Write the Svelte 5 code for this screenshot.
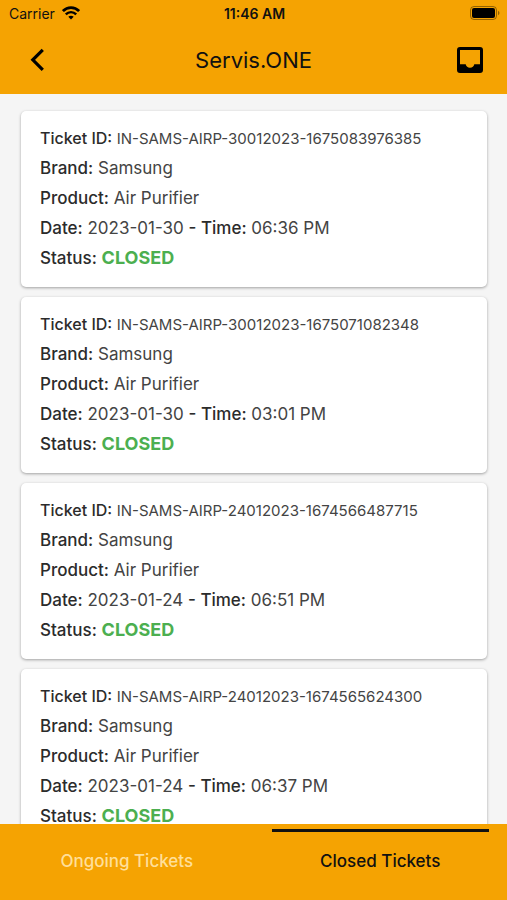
<script lang="ts">
  type Ticket = { id: string; brand: string; product: string; date: string; time: string; status: string };

  const closedTickets: Ticket[] = [
    { id: 'IN-SAMS-AIRP-30012023-1675083976385', brand: 'Samsung', product: 'Air Purifier', date: '2023-01-30', time: '06:36 PM', status: 'CLOSED' },
    { id: 'IN-SAMS-AIRP-30012023-1675071082348', brand: 'Samsung', product: 'Air Purifier', date: '2023-01-30', time: '03:01 PM', status: 'CLOSED' },
    { id: 'IN-SAMS-AIRP-24012023-1674566487715', brand: 'Samsung', product: 'Air Purifier', date: '2023-01-24', time: '06:51 PM', status: 'CLOSED' },
    { id: 'IN-SAMS-AIRP-24012023-1674565624300', brand: 'Samsung', product: 'Air Purifier', date: '2023-01-24', time: '06:37 PM', status: 'CLOSED' }
  ];

  let activeTab = $state('closed');
  let tickets = $derived(activeTab === 'closed' ? closedTickets : []);
</script>

<div class="screen">
  <header>
    <div class="status-bar">
      <div class="carrier">
        <span>Carrier</span>
        <svg width="18" height="14" viewBox="0 0 18 14" fill="none" stroke="#000" stroke-width="2.8" aria-hidden="true">
          <path d="M0.9 5.1C5.4 0.4 12.6 0.4 17.1 5.1" />
          <path d="M3.8 8.4C6.7 5.4 11.3 5.4 14.2 8.4" stroke-width="2.4" />
          <path d="M6.3 10.8C7.8 9.3 10.2 9.3 11.7 10.8L9 13.6Z" fill="#000" stroke="none" />
        </svg>
      </div>
      <span class="clock">11:46 AM</span>
      <svg class="battery" width="30" height="14" viewBox="0 0 30 14" aria-hidden="true">
        <rect x="0.5" y="0.5" width="26" height="13" rx="3.5" fill="none" stroke="#000" stroke-opacity="0.4" />
        <rect x="2" y="2" width="23" height="10" rx="2" fill="#000" />
        <path d="M28 4.8C30 5.6 30 8.4 28 9.2Z" fill="#000" fill-opacity="0.4" />
      </svg>
    </div>
    <div class="app-bar">
      <button class="icon-button" aria-label="Back">
        <svg width="26" height="26" viewBox="0 0 26 26" fill="none" stroke="#000" stroke-width="3.2">
          <path d="M18.8 2.8L8.8 12.8L18.8 22.8" />
        </svg>
      </button>
      <h1>Servis.ONE</h1>
      <button class="icon-button" aria-label="Inbox">
        <svg width="26" height="26" viewBox="0 0 26 26">
          <path fill-rule="evenodd" d="M3 0H23A3 3 0 0 1 26 3V23A3 3 0 0 1 23 26H3A3 3 0 0 1 0 23V3A3 3 0 0 1 3 0ZM3 3V17.3H8.7A4.4 4.4 0 0 0 17.3 17.3H23V3Z" />
        </svg>
      </button>
    </div>
  </header>

  <main>
    {#each tickets as ticket (ticket.id)}
      <article>
        <p class="ticket-id"><b>Ticket ID:</b> <span>{ticket.id}</span></p>
        <p><b>Brand:</b> {ticket.brand}</p>
        <p><b>Product:</b> {ticket.product}</p>
        <p><b>Date:</b> {ticket.date} <b>- Time:</b> {ticket.time}</p>
        <p><b>Status:</b> <strong>{ticket.status}</strong></p>
      </article>
    {/each}
  </main>

  <nav>
    <button class:active={activeTab === 'ongoing'} onclick={() => (activeTab = 'ongoing')}>Ongoing Tickets</button>
    <button class:active={activeTab === 'closed'} onclick={() => (activeTab = 'closed')}>Closed Tickets</button>
  </nav>
</div>

<style>
  :global(body) {
    margin: 0;
  }

  .screen {
    display: flex;
    flex-direction: column;
    height: 100vh;
    background: #f5f5f5;
    color: #444;
    font-family: Inter, sans-serif;
  }

  header {
    flex: none;
    background: #f5a302;
    color: #111;
  }

  .status-bar {
    display: grid;
    grid-template-columns: 1fr auto 1fr;
    align-items: center;
    height: 26px;
    padding: 0 7px 0 9px;
    font-size: 14px;
  }

  .carrier {
    display: flex;
    align-items: center;
    gap: 7px;
  }

  .clock {
    font-weight: 600;
  }

  .battery {
    justify-self: end;
  }

  .app-bar {
    display: flex;
    align-items: center;
    justify-content: space-between;
    height: 68px;
    padding: 0 24px;
  }

  h1 {
    margin: 0;
    font-size: 22px;
    font-weight: 400;
  }

  button {
    border: 0;
    padding: 0;
    background: none;
    font: inherit;
    cursor: pointer;
  }

  .icon-button {
    display: flex;
  }

  main {
    flex: 1;
    display: flex;
    flex-direction: column;
    gap: 10px;
    min-height: 0;
    padding: 17px 20px 17px 21px;
    overflow-y: auto;
    scrollbar-width: none;
  }

  article {
    flex: none;
    padding: 12px 19px 14px;
    border-radius: 5px;
    background: #fff;
    box-shadow: 0 1px 3px rgba(0, 0, 0, 0.35);
  }

  p {
    margin: 0;
    font-size: 17px;
    line-height: 30px;
  }

  b {
    color: #2b2b2b;
    font-weight: 500;
  }

  strong {
    color: #4caf50;
    font-size: 18px;
    font-weight: 700;
    line-height: 1;
  }

  .ticket-id {
    font-size: 16px;
  }

  .ticket-id span {
    font-size: 15px;
    line-height: 1;
  }

  nav {
    flex: none;
    display: flex;
    height: 76px;
    background: #f5a302;
  }

  nav button {
    flex: 1;
    box-sizing: border-box;
    margin: 5px 18px 0;
    padding-bottom: 11px;
    border-top: 3px solid transparent;
    color: #ffdf99;
    font-size: 17px;
    font-weight: 500;
  }

  nav button.active {
    border-top-color: #111;
    color: #111;
  }
</style>
